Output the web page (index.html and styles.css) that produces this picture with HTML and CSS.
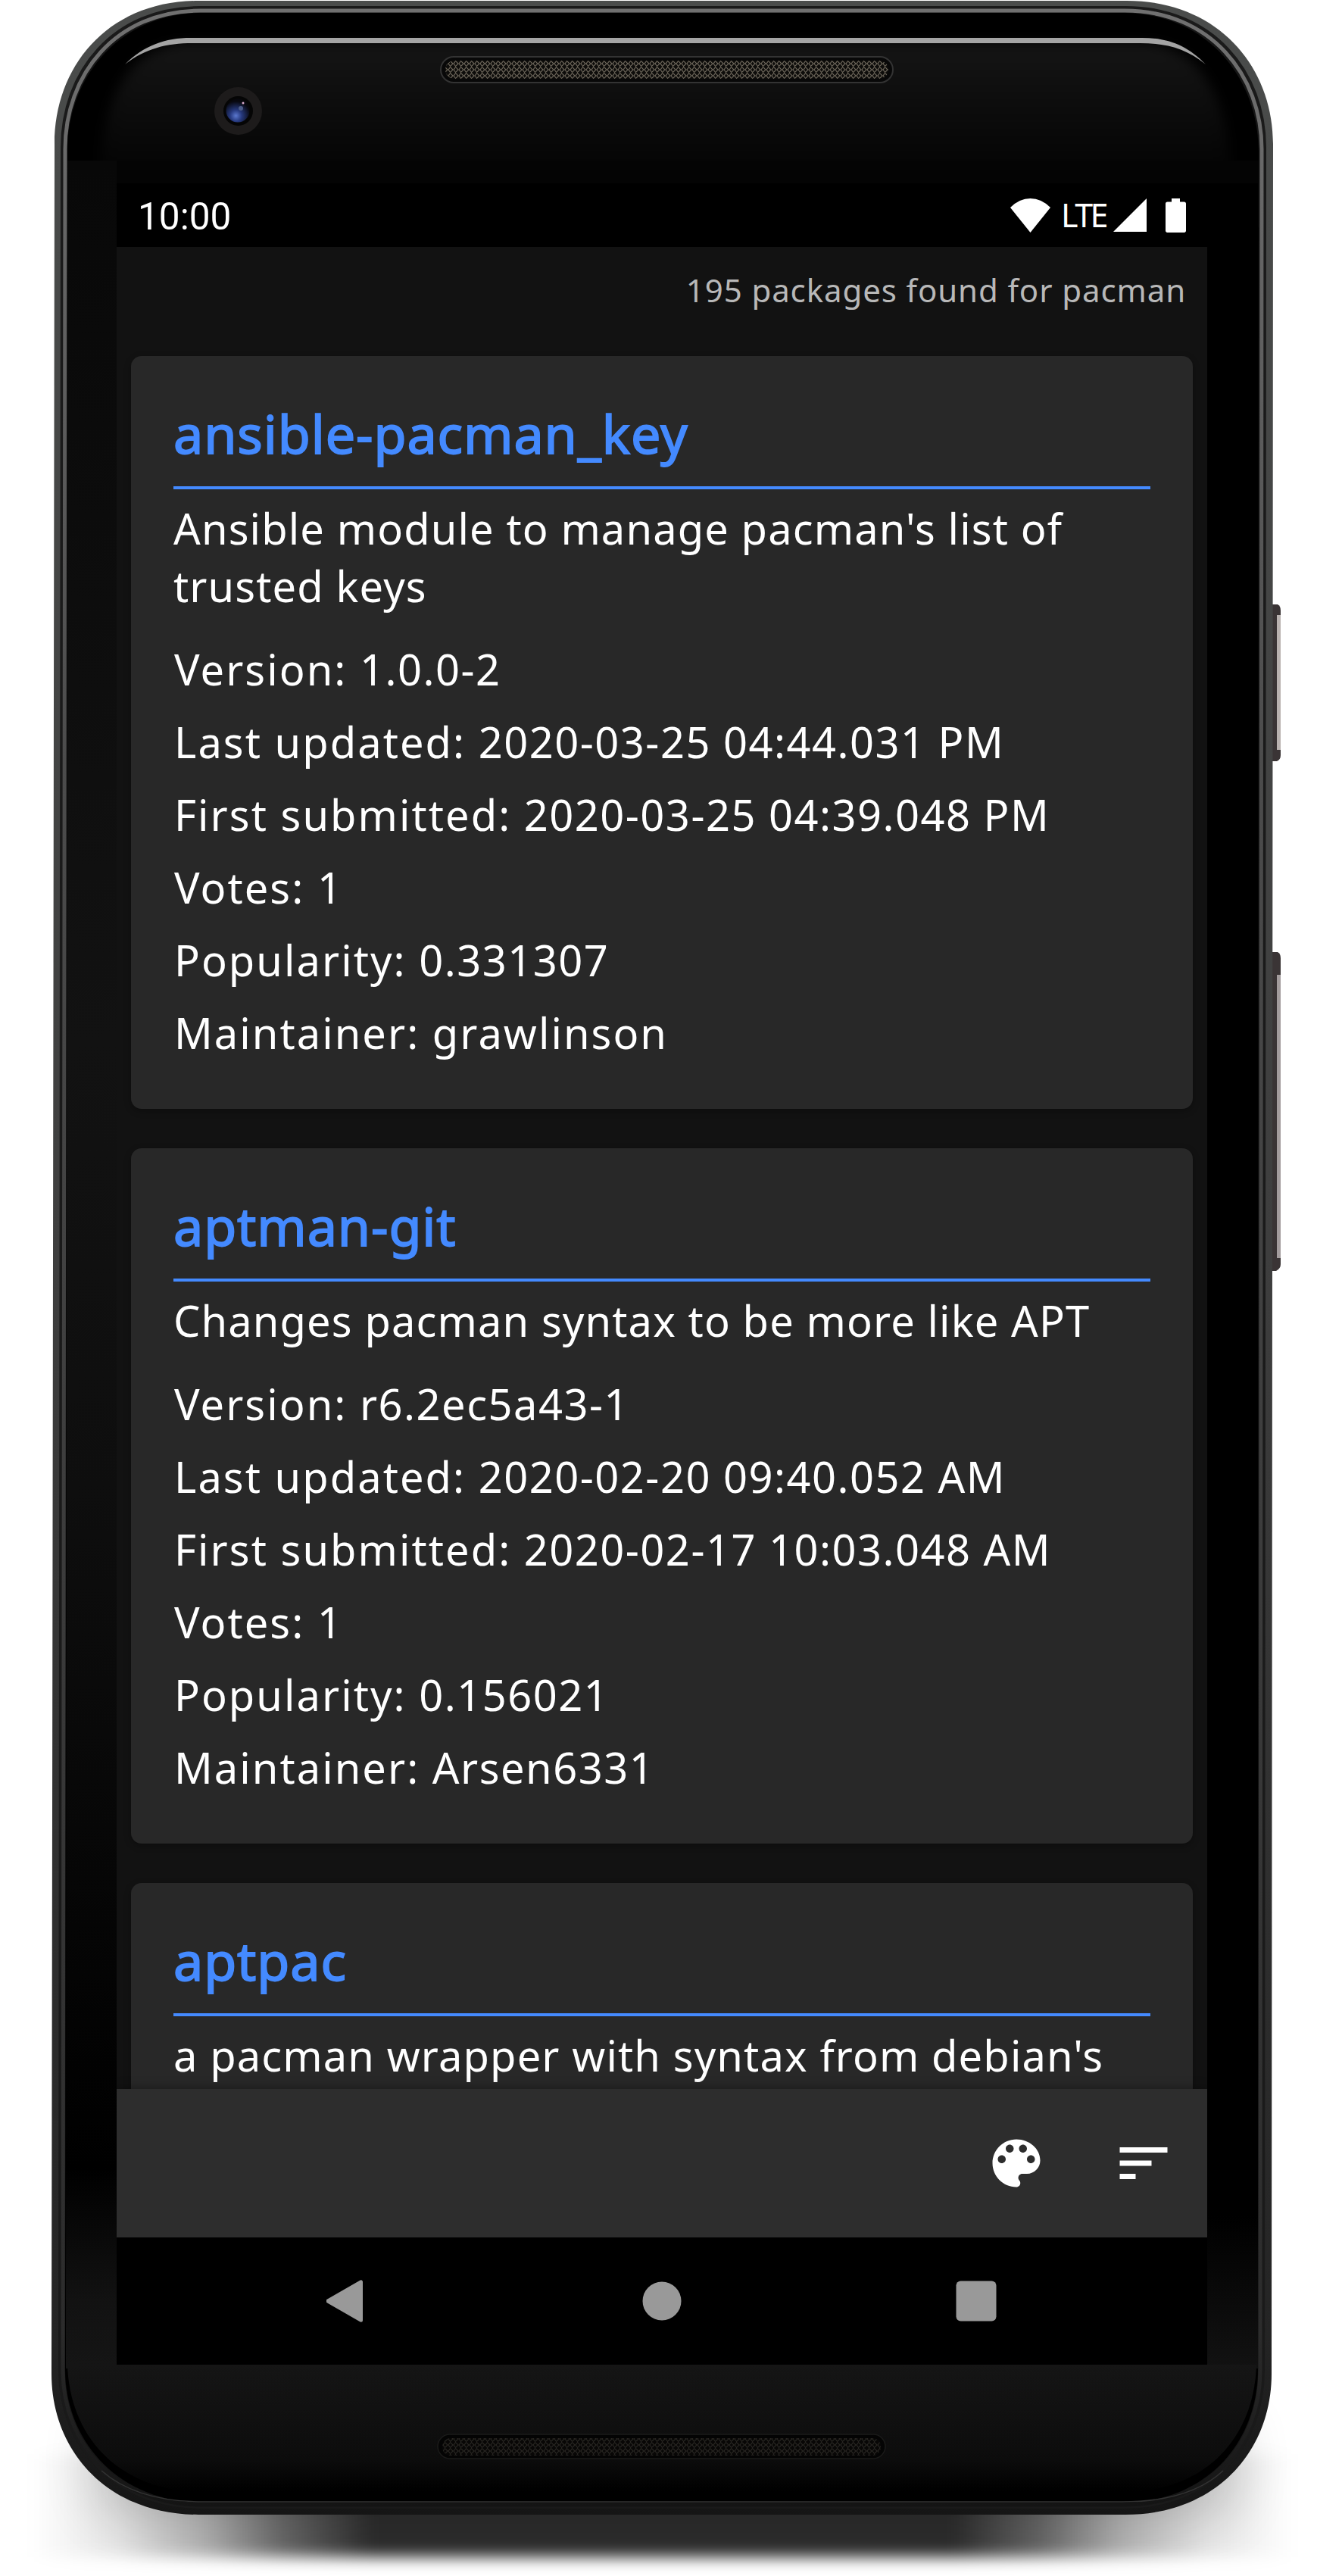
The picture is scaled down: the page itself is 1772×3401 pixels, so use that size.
FILE: index.html
```html
<!DOCTYPE html>
<html lang="en">
<head>
<meta charset="utf-8">
<title>Packages</title>
<link rel="stylesheet" href="styles.css">
</head>
<body>
<svg class="device" viewBox="0 0 1772 3401" aria-hidden="true">
  <defs>
    <linearGradient id="floor" x1="0" x2="1">
      <stop offset="0" stop-color="#000" stop-opacity="0"/>
      <stop offset=".07" stop-color="#000" stop-opacity=".1"/>
      <stop offset=".14" stop-color="#000" stop-opacity=".32"/>
      <stop offset=".2" stop-color="#000" stop-opacity=".6"/>
      <stop offset=".27" stop-color="#000" stop-opacity=".83"/>
      <stop offset=".73" stop-color="#000" stop-opacity=".83"/>
      <stop offset=".8" stop-color="#000" stop-opacity=".6"/>
      <stop offset=".86" stop-color="#000" stop-opacity=".32"/>
      <stop offset=".93" stop-color="#000" stop-opacity=".1"/>
      <stop offset="1" stop-color="#000" stop-opacity="0"/>
    </linearGradient>
    <linearGradient id="rim" x1="0" x2="0" y1="0" y2="1">
      <stop offset="0" stop-color="#4a4c4b"/>
      <stop offset=".5" stop-color="#3e3e3e"/>
      <stop offset=".93" stop-color="#242424"/>
      <stop offset="1" stop-color="#151515"/>
    </linearGradient>
    <linearGradient id="ridge" x1="0" x2="0" y1="0" y2="1">
      <stop offset="0" stop-color="#707070"/>
      <stop offset=".3" stop-color="#4c4c4c"/>
      <stop offset=".93" stop-color="#2c2c2c"/>
      <stop offset="1" stop-color="#141414"/>
    </linearGradient>
    <linearGradient id="brow" x1="0" x2="0" y1="57" y2="212" gradientUnits="userSpaceOnUse">
      <stop offset="0" stop-color="#151515"/>
      <stop offset="1" stop-color="#050505"/>
    </linearGradient>
    <linearGradient id="cheek" x1="0" x2="0" y1="0" y2="1">
      <stop offset="0" stop-color="#080808"/>
      <stop offset=".4" stop-color="#121212"/>
      <stop offset=".6" stop-color="#0e0e0e"/>
      <stop offset=".91" stop-color="#000"/>
      <stop offset=".97" stop-color="#121212"/>
      <stop offset="1" stop-color="#151515"/>
    </linearGradient>
    <linearGradient id="cheek2" x1="0" x2="0" y1="0" y2="1">
      <stop offset="0" stop-color="#000"/>
      <stop offset=".93" stop-color="#000"/>
      <stop offset="1" stop-color="#121212"/>
    </linearGradient>
    <linearGradient id="chin" x1="0" x2="0" y1="0" y2="1">
      <stop offset="0" stop-color="#151515"/>
      <stop offset=".75" stop-color="#0c0c0c"/>
      <stop offset="1" stop-color="#000"/>
    </linearGradient>
    <radialGradient id="lens" cx=".42" cy=".72" r=".62">
      <stop offset="0" stop-color="#5b78cf"/>
      <stop offset=".4" stop-color="#26397e"/>
      <stop offset="1" stop-color="#07070d"/>
    </radialGradient>
    <pattern id="mesh" width="7" height="8" patternUnits="userSpaceOnUse">
      <rect width="7" height="8" fill="#0e0d0b"/>
      <path d="M0 1l3 3-3 3M7 0l-3 4 3 4" stroke="#6f685c" stroke-width="1.1" fill="none"/>
    </pattern>
    <filter id="soft" x="-10%" y="-60%" width="120%" height="220%" color-interpolation-filters="sRGB"><feGaussianBlur stdDeviation="10"/></filter>
    <filter id="glow" x="-20%" y="-60%" width="140%" height="220%" color-interpolation-filters="sRGB"><feGaussianBlur stdDeviation="34"/></filter>
    <filter id="fade" x="-20%" y="-30%" width="140%" height="160%" color-interpolation-filters="sRGB"><feGaussianBlur stdDeviation="8"/></filter>
  </defs>
  <path d="M120 3200H1640L1630 3320H130Z" opacity=".18" filter="url(#glow)"/>
  <rect x="40" y="3240" width="1670" height="136" fill="url(#floor)" filter="url(#soft)"/>
  <g>
    <path d="M1678 798h9q4 2 4 8v191q0 6-5 8h-8z" fill="#3a3435"/>
    <path d="M1686 812h5v178h-5z" fill="#b9b2b0"/>
    <path d="M1678 1257h9q4 2 4 8v404q0 6-6 9h-7z" fill="#3a3435"/>
    <path d="M1686 1287h5v374h-5z" fill="#a39c9d"/>
  </g>
  <path d="M72 190C72 88 142 1 262 1H1488C1608 1 1681 88 1681 190L1679 3134C1679 3236 1606 3320 1486 3320H262C142 3320 68 3236 68 3134Z" fill="url(#rim)"/>
  <path d="M82 195C82 95 149 10 264 10H1486C1601 10 1670 95 1670 195L1668 3130C1668 3229 1599 3310 1484 3310H266C151 3310 79 3229 79 3130Z" fill="#161616" stroke="#1a1a1a" stroke-width="4"/>
  <path d="M86 197C86 99 152 14 265 14H1485C1598 14 1666 99 1666 197L1664 3130C1664 3226 1597 3307 1484 3307H266C153 3307 83 3226 83 3130Z" fill="none" stroke="url(#ridge)" stroke-width="5"/>
  <path d="M89 200C89 104 156 17 268 17H1482C1594 17 1662 104 1662 200L1661 3128C1661 3222 1596 3304 1482 3304H268C156 3304 86 3222 86 3128Z" fill="#000"/>
  <path d="M132 260C128 140 165 58 250 57H1508C1590 58 1629 140 1625 260Z" fill="url(#brow)" filter="url(#fade)"/>
  <path d="M89 212H1662V300H89Z" fill="#040404"/>
  <path d="M89 212H154V3127H87Z" fill="url(#cheek)"/>
  <path d="M1594 242H1661V3127H1594Z" fill="url(#cheek2)"/>
  <path d="M89 3122H1659C1656 3220 1590 3290 1484 3290H268C160 3290 92 3220 89 3122Z" fill="url(#chin)"/>
  <path d="M134 3262C166 3290 210 3303 268 3303H1482C1540 3303 1585 3290 1615 3262" fill="none" stroke="#333" stroke-width="1.5"/>
  <path d="M165 85C190 60 218 50 252 50H1508C1542 50 1568 60 1592 85C1566 64 1540 57 1506 57H254C220 57 192 64 165 85Z" fill="#a4a4a4"/>
  <rect x="582" y="75" width="597" height="34" rx="17" fill="#080808" stroke="#333" stroke-width="2"/>
  <rect x="588" y="80" width="585" height="24" rx="12" fill="url(#mesh)"/>
  <rect x="578" y="3214" width="591" height="32" rx="16" fill="#040404" stroke="#1b1b1a" stroke-width="1.5"/>
  <rect x="584" y="3219" width="579" height="23" rx="11" fill="url(#mesh)" opacity=".35"/>
  <circle cx="314.500" cy="146.500" r="31.500" fill="#1d1b1b"/>
  <circle cx="314.500" cy="146.500" r="19.500" fill="#050505"/>
  <circle cx="314" cy="146" r="15.500" fill="url(#lens)"/>
  <circle cx="318" cy="143" r="3" fill="#4b5a86"/>
  <circle cx="321" cy="136" r="1.500" fill="#d9a9c9"/>
</svg>

<main class="screen">
  <header class="status">
    <span class="clock">10:00</span>
    <span class="signals">
      <svg class="wifi" viewBox="0 0 53 45"><path d="M0 12Q12 0 26.500 0T53 12L26.500 45Z"/></svg>
      <span class="lte">LTE</span>
      <svg class="cell" viewBox="0 0 44 44"><path d="M44 0V44H0Z"/></svg>
      <svg class="battery" viewBox="0 0 27 45"><path d="M8 0H19V4.500H24.500A2.500 2.500 0 0 1 27 7V42A2.500 2.500 0 0 1 24.500 45H2.500A2.500 2.500 0 0 1 0 42V7A2.500 2.500 0 0 1 2.500 4.500H8Z"/></svg>
    </span>
  </header>

  <section class="results">
    <p class="count">195 packages found for pacman</p>

    <article class="card">
      <h2>ansible-pacman_key</h2>
      <p class="about">Ansible module to manage pacman's list of trusted keys</p>
      <ul>
        <li>Version: <span>1.0.0-2</span></li>
        <li>Last updated: <span>2020-03-25 04:44.031 PM</span></li>
        <li>First submitted: <span>2020-03-25 04:39.048 PM</span></li>
        <li>Votes: <span>1</span></li>
        <li>Popularity: <span>0.331307</span></li>
        <li>Maintainer: grawlinson</li>
      </ul>
    </article>

    <article class="card">
      <h2>aptman-git</h2>
      <p class="about">Changes pacman syntax to be more like APT</p>
      <ul>
        <li>Version: <span>r6.2ec5a43-1</span></li>
        <li>Last updated: <span>2020-02-20 09:40.052 AM</span></li>
        <li>First submitted: <span>2020-02-17 10:03.048 AM</span></li>
        <li>Votes: <span>1</span></li>
        <li>Popularity: <span>0.156021</span></li>
        <li>Maintainer: <span>Arsen6331</span></li>
      </ul>
    </article>

    <article class="card">
      <h2>aptpac</h2>
      <p class="about">a pacman wrapper with syntax from debian's</p>
    </article>
  </section>

  <footer class="toolbar">
    <svg viewBox="0 0 24 24"><path d="M12 3c-4.970 0-9 4.030-9 9s4.030 9 9 9c.830 0 1.500-.670 1.500-1.500 0-.390-.150-.740-.390-1.010-.230-.260-.380-.610-.380-.990 0-.830.670-1.500 1.500-1.500H16c2.760 0 5-2.240 5-5 0-4.420-4.030-8-9-8zm-5.500 9c-.830 0-1.500-.670-1.500-1.500S5.670 9 6.500 9 8 9.670 8 10.500 7.330 12 6.500 12zm3-4C8.670 8 8 7.330 8 6.500S8.670 5 9.500 5s1.500.670 1.500 1.500S10.330 8 9.500 8zm5 0c-.830 0-1.500-.670-1.500-1.500S13.670 5 14.500 5s1.500.670 1.500 1.500S15.330 8 14.500 8zm3 4c-.830 0-1.500-.670-1.500-1.500S16.670 9 17.500 9s1.500.670 1.500 1.500-.670 1.500-1.500 1.500z"/></svg>
    <svg viewBox="0 0 24 24"><path d="M3 18h6v-2H3v2zM3 6v2h18V6H3zm0 7h12v-2H3v2z"/></svg>
  </footer>

  <nav class="nav">
    <svg viewBox="0 0 56 56"><path d="M45.500 2.800V53.200L2 28Z" stroke="#999" stroke-width="5" stroke-linejoin="round"/></svg>
    <svg viewBox="0 0 56 56"><circle cx="28" cy="28" r="25.500"/></svg>
    <svg viewBox="0 0 56 56"><rect x="1.500" y="1.500" width="53" height="53" rx="6"/></svg>
  </nav>
</main>
</body>
</html>
```
FILE: styles.css
```css
* { box-sizing: border-box; }

body {
  margin: 0;
  width: 1772px;
  height: 3401px;
  padding: 242px 0 0 154px;
  position: relative;
  overflow: hidden;
  background: #fff;
  font-family: "Noto Sans", sans-serif;
}

.device {
  position: absolute;
  left: 0;
  top: 0;
  width: 1772px;
  height: 3401px;
}

.screen {
  position: relative;
  width: 1440px;
  height: 2880px;
  display: flex;
  flex-direction: column;
  background: #121212;
  color: #fff;
  overflow: hidden;
}

.status {
  height: 84px;
  flex: none;
  display: flex;
  justify-content: space-between;
  align-items: center;
  padding: 0 28px 0 28px;
  background: #000;
}

.clock {
  font: 49.500px/84px Roboto, sans-serif;
  padding-top: 3px;
}

.signals {
  display: flex;
  align-items: center;
  fill: #fff;
}

.wifi { width: 53px; height: 45px; }
.lte {
  width: 66px;
  padding-left: 14px;
  font-size: 43px;
  line-height: 80px;
  letter-spacing: -3.5px;
}
.cell { width: 44px; height: 44px; margin: 0 25px 0 17px; }
.battery { width: 27px; height: 45px; }

.results {
  flex: 1;
  min-height: 0;
  overflow: hidden;
  padding: 0 19px;
}

.count {
  margin: 0;
  height: 144px;
  padding: 28px 9px 0 0;
  text-align: right;
  font-size: 42px;
  line-height: 57px;
  letter-spacing: .9px;
  color: #b8b8b8;
}

.card {
  margin-bottom: 52.500px;
  padding: 54px 56px 52.500px;
  border-radius: 14px;
  background: #282828;
  box-shadow: 0 3px 10px rgba(0, 0, 0, .3);
}

.card h2 {
  margin: 0;
  height: 122px;
  border-bottom: 4px solid #448aff;
  font-size: 70px;
  line-height: 96px;
  font-weight: 400;
  letter-spacing: .9px;
  -webkit-text-stroke: 1.800px #448aff;
  color: #448aff;
}

.about {
  margin: 13px 0 0;
  font-size: 56px;
  line-height: 76px;
  letter-spacing: 1.120px;
}

.card ul {
  margin: 24px 0 0;
  padding: 0;
  list-style: none;
}

.card li {
  height: 96px;
  padding-left: 1px;
  font-size: 56px;
  line-height: 96px;
  letter-spacing: 2.050px;
  white-space: nowrap;
}
.card li span { letter-spacing: 1.480px; }

.toolbar {
  position: relative;
  height: 196px;
  flex: none;
  display: flex;
  justify-content: flex-end;
  align-items: center;
  gap: 84px;
  padding-right: 42px;
  background: #2d2d2d;
  box-shadow: 0 0 14px rgba(0, 0, 0, .4);
  fill: #fff;
}
.toolbar svg { width: 84px; height: 84px; }

.nav {
  position: relative;
  height: 168px;
  flex: none;
  display: flex;
  justify-content: center;
  align-items: center;
  gap: 359px;
  background: #000;
  fill: #999;
}
.nav svg { width: 56px; height: 56px; }
```
